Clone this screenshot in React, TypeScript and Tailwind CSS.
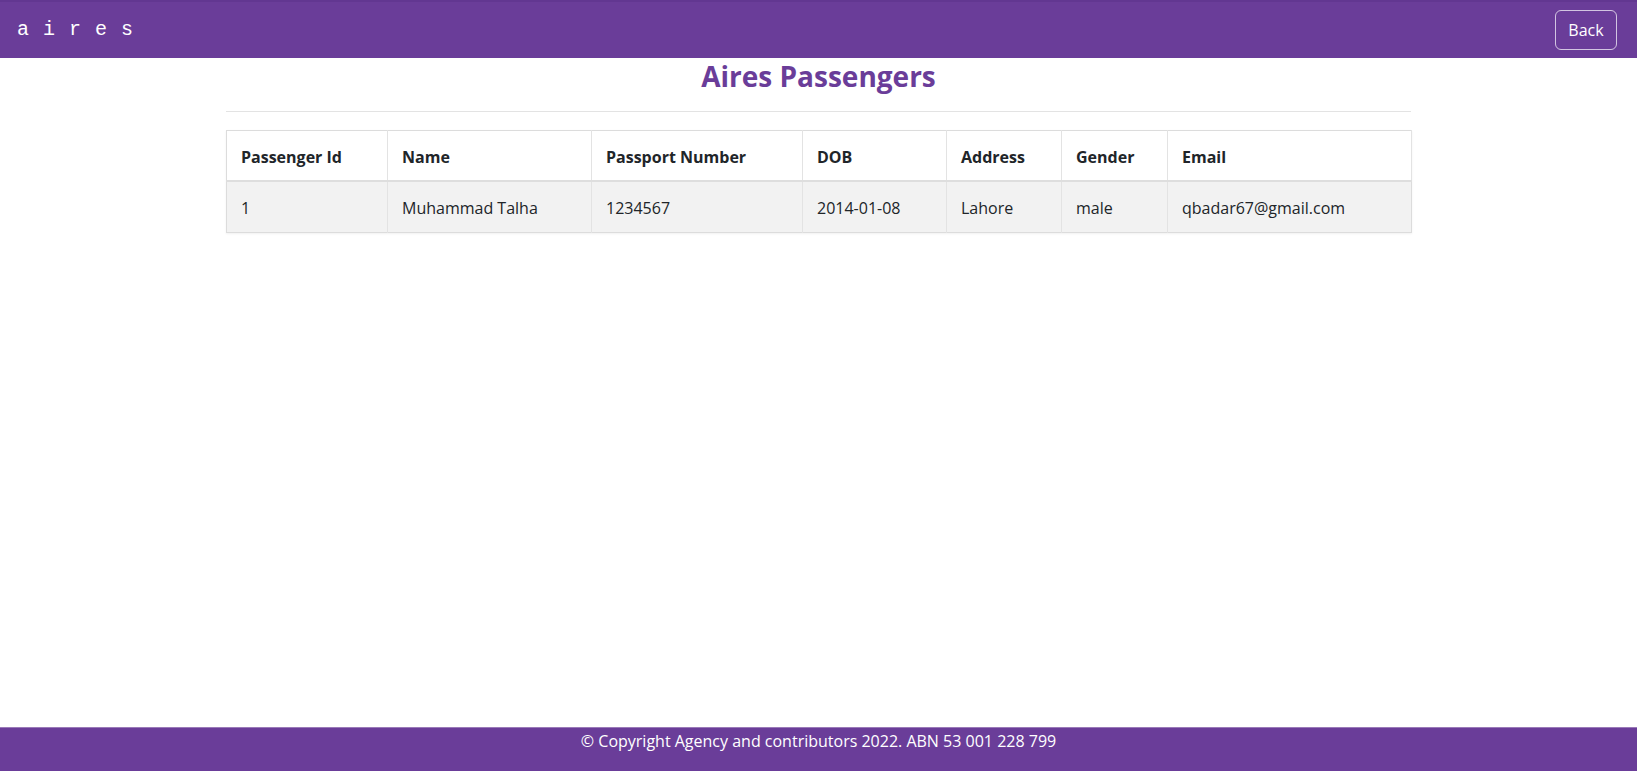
import React from 'react';

const columns = [
  { label: 'Passenger Id', width: 'w-[161px]' },
  { label: 'Name', width: 'w-[204px]' },
  { label: 'Passport Number', width: 'w-[211px]' },
  { label: 'DOB', width: 'w-[144px]' },
  { label: 'Address', width: 'w-[115px]' },
  { label: 'Gender', width: 'w-[106px]' },
  { label: 'Email', width: 'w-[244px]' },
];

const passengers = [
  {
    id: '1',
    name: 'Muhammad Talha',
    passport: '1234567',
    dob: '2014-01-08',
    address: 'Lahore',
    gender: 'male',
    email: 'qbadar67@gmail.com',
  },
];

export default function App() {
  return (
    <div className="min-h-screen flex flex-col bg-white text-[#212529] font-['Open_Sans',sans-serif]">
      {/* Navbar */}
      <header className="h-[58px] bg-[#6a3d99] border-t-2 border-[#623791] flex items-center justify-between pl-[17px] pr-[20px]">
        <span className="font-['Liberation_Mono',monospace] text-[20px] tracking-[1px] text-white whitespace-pre">
          a i r e s
        </span>
        <button className="h-[40px] w-[62px] rounded-md border border-white/70 text-white text-[16px] leading-none">
          Back
        </button>
      </header>

      {/* Content */}
      <main className="flex-1">
        <div className="w-[1185px] mx-auto">
          <h2 className="mt-[2px] text-center text-[28px] leading-[1.2] font-bold text-[#6a3d99]">
            Aires Passengers
          </h2>
          <hr className="mt-[17px] border-t border-[#e3e3e3]" />

          <table className="mt-[18px] w-[1185px] table-fixed border-collapse border border-[#dcdcdc] shadow-[0_1px_2px_rgba(0,0,0,0.06)] text-[16px]">
            <thead>
              <tr className="h-[51px] border-b-2 border-[#dedede]">
                {columns.map((c) => (
                  <th
                    key={c.label}
                    className={`${c.width} px-[14px] pt-[3px] text-left font-bold border-r border-[#e3e3e3]`}
                  >
                    {c.label}
                  </th>
                ))}
              </tr>
            </thead>
            <tbody>
              {passengers.map((p) => (
                <tr key={p.id} className="h-[51px] bg-[#f2f2f2] [&>td]:pt-[2px]">
                  <td className="px-[14px] border-r border-[#e3e3e3]">{p.id}</td>
                  <td className="px-[14px] border-r border-[#e3e3e3]">{p.name}</td>
                  <td className="px-[14px] border-r border-[#e3e3e3]">{p.passport}</td>
                  <td className="px-[14px] border-r border-[#e3e3e3]">{p.dob}</td>
                  <td className="px-[14px] border-r border-[#e3e3e3]">{p.address}</td>
                  <td className="px-[14px] border-r border-[#e3e3e3]">{p.gender}</td>
                  <td className="px-[14px]">{p.email}</td>
                </tr>
              ))}
            </tbody>
          </table>
        </div>
      </main>

      {/* Footer */}
      <footer className="h-[44px] bg-[#6a3d99] border-t border-[#9a7ab8] pt-[1px] text-center text-white text-[16px]">
        © Copyright Agency and contributors 2022. ABN 53 001 228 799
      </footer>
    </div>
  );
}
